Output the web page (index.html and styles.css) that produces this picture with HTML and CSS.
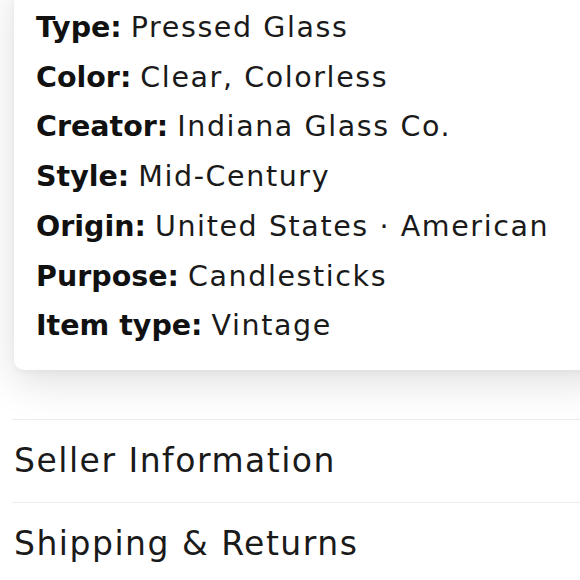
FILE: index.html
```html
<!DOCTYPE html>
<html>
<head>
<meta charset="utf-8">
<link rel="stylesheet" href="styles.css">
</head>
<body>
<div class="page">
  <div class="card">
    <ul class="specs">
      <li><b>Type:</b> <span class="val">Pressed Glass</span></li>
      <li><b>Color:</b> <span class="val">Clear, Colorless</span></li>
      <li><b>Creator:</b> <span class="val">Indiana Glass Co.</span></li>
      <li><b>Style:</b> <span class="val">Mid-Century</span></li>
      <li><b>Origin:</b> <span class="val">United States · American</span></li>
      <li><b>Purpose:</b> <span class="val">Candlesticks</span></li>
      <li><b>Item type:</b> <span class="val">Vintage</span></li>
    </ul>
  </div>
  <div class="sections">
    <div class="section">Seller Information</div>
    <div class="section">Shipping &amp; Returns</div>
  </div>
</div>
</body>
</html>
```
FILE: styles.css
```css
html, body {
  margin: 0;
  padding: 0;
  background: #ffffff;
  overflow: hidden;
}
body {
  font-family: "DejaVu Sans", sans-serif;
  color: #161616;
}
.page {
  width: 580px;
  height: 580px;
  overflow: hidden;
}
.card {
  margin: -20px -30px 0 14px;
  padding: 23px 0 19px 22px;
  background: #ffffff;
  border-radius: 10px;
  box-shadow: 0 12px 40px rgba(0, 0, 0, 0.13), 0 2px 6px rgba(0, 0, 0, 0.04);
}
.specs {
  list-style: none;
  margin: 0;
  padding: 0;
}
.specs li {
  font-size: 28.5px;
  line-height: 49.7px;
  white-space: nowrap;
}
.specs b {
  font-weight: 700;
  color: #111;
}
.val {
  letter-spacing: 1.6px;
  color: #1a1a1a;
}
.sections {
  margin: 49px 0 0 12px;
}
.section {
  border-top: 1px solid #ececec;
  height: 82px;
  box-sizing: content-box;
  display: flex;
  align-items: center;
  padding-left: 2px;
  font-size: 33px;
  letter-spacing: 1.5px;
  color: #1a1a1a;
}
.section > * {
  margin: 0;
}
```
